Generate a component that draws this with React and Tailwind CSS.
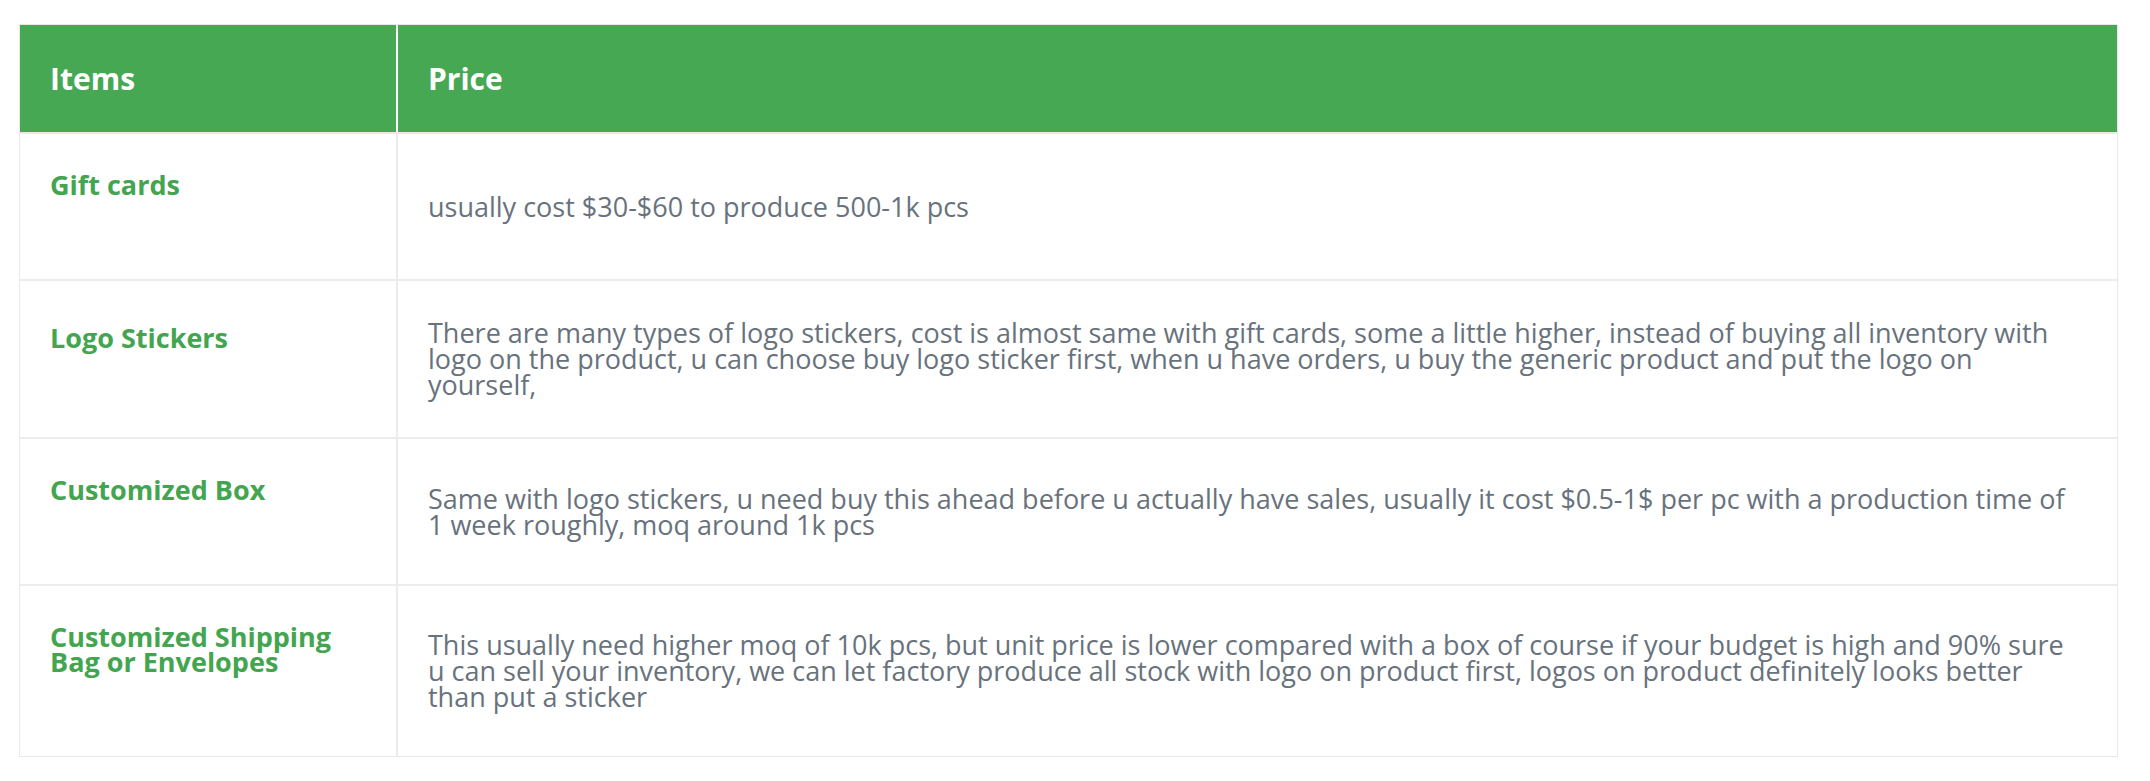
import React from "react";

const rows = [
  {
    item: "Gift cards",
    price: "usually cost $30-$60 to produce 500-1k pcs",
  },
  {
    item: "Logo Stickers",
    price:
      "There are many types of logo stickers, cost is almost same with gift cards, some a little higher, instead of buying all inventory with logo on the product, u can choose buy logo sticker first, when u have orders, u buy the generic product and put the logo on yourself,",
  },
  {
    item: "Customized Box",
    price:
      "Same with logo stickers, u need buy this ahead before u actually have sales, usually it cost $0.5-1$ per pc with a production time of 1 week roughly, moq around 1k pcs",
  },
  {
    item: "Customized Shipping Bag or Envelopes",
    price:
      "This usually need higher moq of 10k pcs, but unit price is lower compared with a box of course if your budget is high and 90% sure u can sell your inventory, we can let factory produce all stock with logo on product first, logos on product definitely looks better than put a sticker",
  },
];

const App = () => {
  return (
    <div className="min-h-screen bg-white pt-[24px] pl-[19px] font-['Open_Sans',sans-serif]">
      <div className="w-[2099px] border border-[#e9e9e9]">
        {/* Header */}
        <div className="grid grid-cols-[378px_1fr] bg-[#47a854] border-b-2 border-[#e9e9e9]">
          <div className="h-[107px] flex items-center pl-[30px] border-r-2 border-white">
            <p className="text-[30px] font-bold text-white leading-none">Items</p>
          </div>
          <div className="h-[107px] flex items-center pl-[30px]">
            <p className="text-[30px] font-bold text-white leading-none">Price</p>
          </div>
        </div>

        {/* Rows */}
        {rows.map((row, i) => (
          <div
            key={row.item}
            className={
              "grid grid-cols-[378px_1fr] " +
              (i < rows.length - 1 ? "border-b-2 border-[#ececec]" : "")
            }
          >
            <div className="flex flex-col justify-center pl-[30px] pr-[30px] pt-[38px] pb-[82px] border-r-2 border-[#ececec]">
              <p className="text-[27px] font-bold text-[#43a54f] leading-[25px]">{row.item}</p>
            </div>
            <div className="flex flex-col justify-center pl-[30px] pr-[40px] py-[39px]">
              <p className="text-[27px] text-[#68727d] leading-[26px]">{row.price}</p>
            </div>
          </div>
        ))}
      </div>
    </div>
  );
};

export default App;
